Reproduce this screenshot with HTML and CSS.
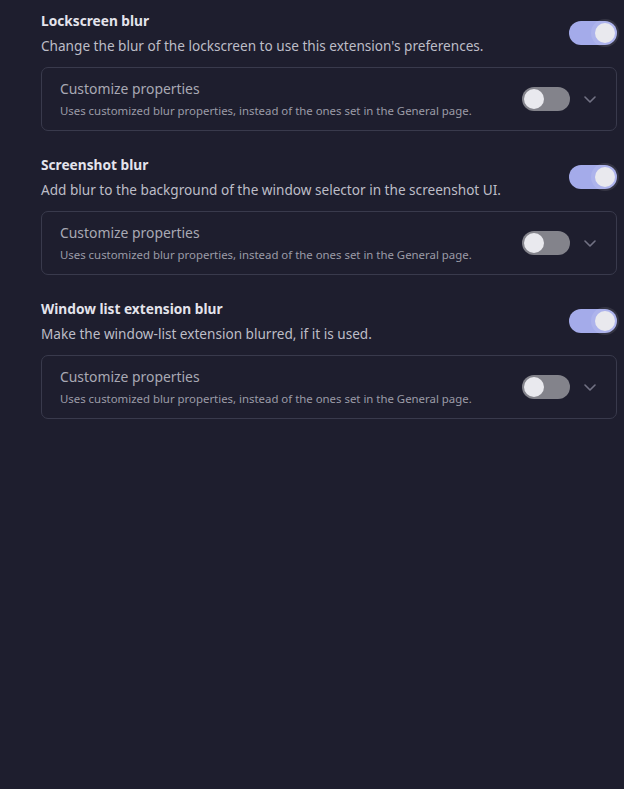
FILE: index.html
```html
<!DOCTYPE html>
<html>
<head>
<meta charset="utf-8">
<link rel="stylesheet" href="styles.css">
</head>
<body>
<div class="page">
  <section class="group">
    <div class="group-header">
      <div class="group-text">
        <div class="group-title">Lockscreen blur</div>
        <div class="group-desc">Change the blur of the lockscreen to use this extension's preferences.</div>
      </div>
      <div class="switch on"><span class="knob"></span></div>
    </div>
    <div class="card">
      <div class="row-text">
        <div class="row-title">Customize properties</div>
        <div class="row-desc">Uses customized blur properties, instead of the ones set in the General page.</div>
      </div>
      <div class="switch off"><span class="knob"></span></div>
      <svg class="chevron" width="12" height="7" viewBox="0 0 12 7"><path d="M1 1 L6 6 L11 1" fill="none" stroke="currentColor" stroke-width="1.6" stroke-linecap="round" stroke-linejoin="round"/></svg>
    </div>
  </section>
  <section class="group">
    <div class="group-header">
      <div class="group-text">
        <div class="group-title">Screenshot blur</div>
        <div class="group-desc">Add blur to the background of the window selector in the screenshot UI.</div>
      </div>
      <div class="switch on"><span class="knob"></span></div>
    </div>
    <div class="card">
      <div class="row-text">
        <div class="row-title">Customize properties</div>
        <div class="row-desc">Uses customized blur properties, instead of the ones set in the General page.</div>
      </div>
      <div class="switch off"><span class="knob"></span></div>
      <svg class="chevron" width="12" height="7" viewBox="0 0 12 7"><path d="M1 1 L6 6 L11 1" fill="none" stroke="currentColor" stroke-width="1.6" stroke-linecap="round" stroke-linejoin="round"/></svg>
    </div>
  </section>
  <section class="group">
    <div class="group-header">
      <div class="group-text">
        <div class="group-title">Window list extension blur</div>
        <div class="group-desc">Make the window-list extension blurred, if it is used.</div>
      </div>
      <div class="switch on"><span class="knob"></span></div>
    </div>
    <div class="card">
      <div class="row-text">
        <div class="row-title">Customize properties</div>
        <div class="row-desc">Uses customized blur properties, instead of the ones set in the General page.</div>
      </div>
      <div class="switch off"><span class="knob"></span></div>
      <svg class="chevron" width="12" height="7" viewBox="0 0 12 7"><path d="M1 1 L6 6 L11 1" fill="none" stroke="currentColor" stroke-width="1.6" stroke-linecap="round" stroke-linejoin="round"/></svg>
    </div>
  </section>
</div>
</body>
</html>
```
FILE: styles.css
```css
html, body {
  margin: 0;
  padding: 0;
  height: 100%;
}
body {
  background: #1e1e2e;
  font-family: "Noto Sans", "Open Sans", sans-serif;
  color: #e2e2ea;
  overflow: hidden;
}
.page {
  padding: 11px 7px 0 41px;
  display: flex;
  flex-direction: column;
  gap: 24px;
}
.group {
  display: flex;
  flex-direction: column;
  gap: 11px;
}
.group-header {
  display: flex;
  align-items: center;
  justify-content: space-between;
  height: 45px;
}
.group-text {
  display: flex;
  flex-direction: column;
  gap: 5px;
}
.group-title {
  font-size: 13.7px;
  font-weight: 700;
  line-height: 20px;
  color: #e4e4ec;
}
.group-desc {
  font-size: 13.6px;
  line-height: 20px;
  color: #bdbdc7;
}
.card {
  height: 62px;
  border: 1px solid #393a4c;
  border-radius: 7px;
  display: flex;
  align-items: center;
  padding: 0 20px 0 18px;
}
.row-text {
  flex: 1;
  display: flex;
  flex-direction: column;
  gap: 4px;
  padding-top: 1px;
}
.row-title {
  font-size: 13.9px;
  line-height: 18px;
  color: #a9a9b4;
}
.row-desc {
  font-size: 11.4px;
  line-height: 17px;
  color: #9b9ba7;
}
.switch {
  width: 48px;
  height: 24px;
  border-radius: 12px;
  position: relative;
  flex: none;
}
.switch.on {
  background: #a4abea;
  margin-top: -1px;
}
.switch.off {
  background: #83838b;
}
.knob {
  position: absolute;
  top: 2px;
  width: 20px;
  height: 20px;
  border-radius: 50%;
  background: #e9e9ee;
}
.switch.on .knob {
  right: 2px;
  box-shadow: 0 0 0 4px rgba(255, 255, 255, 0.1);
}
.switch.off .knob {
  left: 2px;
}
.chevron {
  color: #727284;
  margin-left: 14px;
  flex: none;
}
```
